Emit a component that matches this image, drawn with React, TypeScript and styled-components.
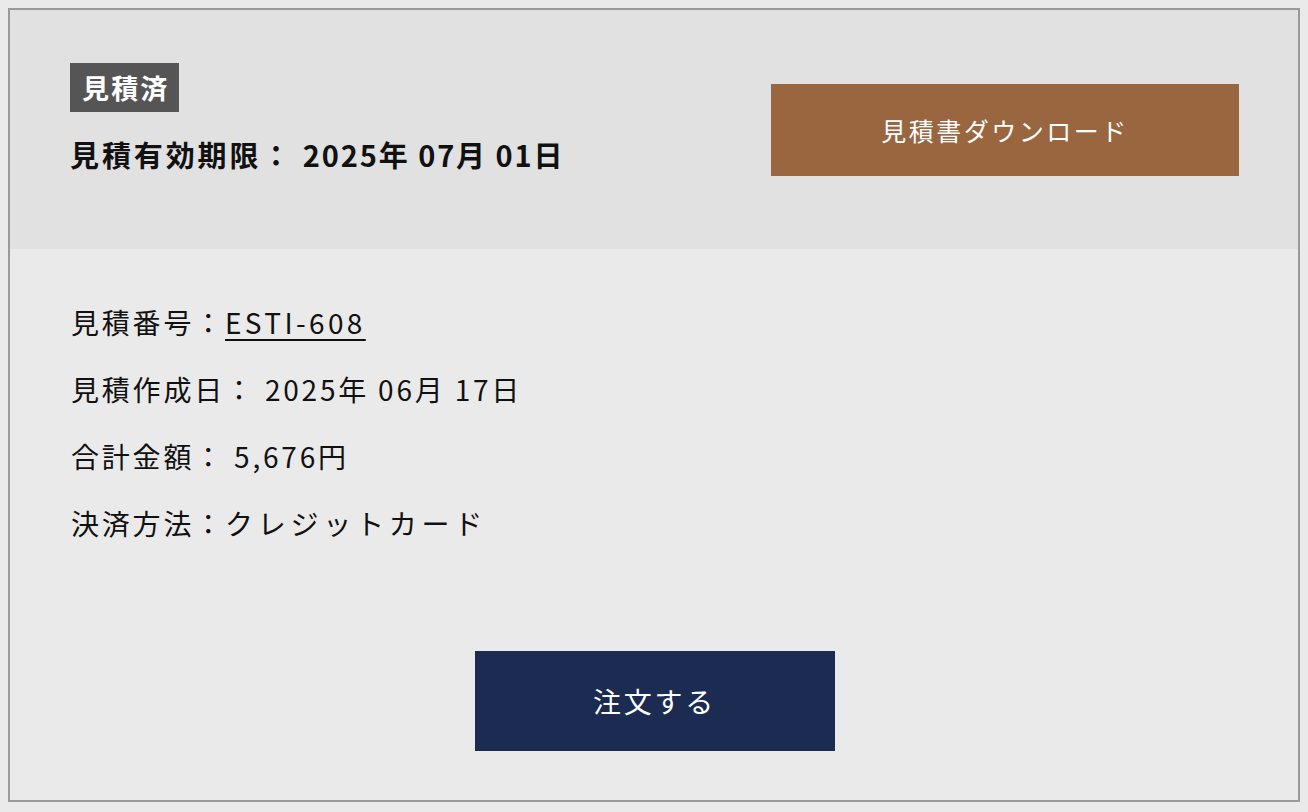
import * as React from 'react';
import styled, { createGlobalStyle } from 'styled-components';

const GlobalStyle = createGlobalStyle`
  html, body {
    margin: 0;
    padding: 0;
    background: #eaeaea;
  }
  body {
    padding: 8px;
    font-family: "Noto Sans CJK JP", "Noto Sans", sans-serif;
    color: #111;
  }
`;

const Card = styled.section`
  border: 2px solid #9a9a9a;
  background: #eaeaea;
  height: 794px;
  box-sizing: border-box;
  display: flex;
  flex-direction: column;
`;

const Header = styled.header`
  background: #e1e1e1;
  height: 239px;
  box-sizing: border-box;
  padding: 53px 59px 0 60px;
  display: flex;
  justify-content: space-between;
  align-items: flex-start;
`;

const HeaderStart = styled.div`
  display: flex;
  flex-direction: column;
  align-items: flex-start;
  gap: 22px;
`;

const Badge = styled.span`
  display: inline-flex;
  align-items: center;
  height: 49px;
  padding: 0 10px 0 12px;
  background: #555555;
  color: #fff;
  font-weight: 700;
  font-size: 27px;
  letter-spacing: 0.08em;
`;

const Expiry = styled.h2`
  margin: 0;
  font-size: 29px;
  font-weight: 700;
  letter-spacing: 0.1em;
  line-height: 40px;
  color: #111;
`;

const ExpiryDate = styled.time`
  letter-spacing: 0.065em;
`;

const ActionButton = styled.button<{ $tone: 'brown' | 'navy'; $w: number; $h: number; $size: number }>`
  width: ${(p) => p.$w}px;
  height: ${(p) => p.$h}px;
  border: none;
  border-radius: 0;
  background: ${(p) => (p.$tone === 'brown' ? '#996640' : '#1b2b51')};
  color: #fff;
  font-family: inherit;
  font-size: ${(p) => p.$size}px;
  font-weight: 400;
  letter-spacing: 0.1em;
  cursor: pointer;
`;

const DownloadWrap = styled.div`
  margin-top: 21px;
`;

const Body = styled.div`
  flex: 1;
  padding: 53px 60px 0 61px;
  display: flex;
  flex-direction: column;
`;

const InfoList = styled.dl`
  margin: 0;
  display: flex;
  flex-direction: column;
  gap: 27px;
`;

const InfoRow = styled.div`
  display: flex;
  font-size: 28px;
  line-height: 40px;
  letter-spacing: 0.1em;
`;

const Term = styled.dt`
  margin: 0;
`;

const Value = styled.dd<{ $wide?: boolean }>`
  margin: 0;
  white-space: pre;
  letter-spacing: ${(p) => (p.$wide ? '0.17em' : '0.1em')};
`;

const QuoteLink = styled.a`
  color: #111;
  text-decoration: underline;
  text-underline-offset: 5px;
  text-decoration-thickness: 2px;
  letter-spacing: 0.12em;
`;

const Footer = styled.div`
  display: flex;
  justify-content: center;
  margin-top: 108px;
`;

const rows: { term: string; value: React.ReactNode; wide?: boolean }[] = [
  { term: '見積番号：', value: <QuoteLink href="#">ESTI-608</QuoteLink> },
  { term: '見積作成日：', value: ' 2025年 06月 17日' },
  { term: '合計金額：', value: ' 5,676円' },
  { term: '決済方法：', value: 'クレジットカード', wide: true },
];

const App: React.FC = () => {
  return (
    <>
      <GlobalStyle />
      <Card>
        <Header>
          <HeaderStart>
            <Badge>見積済</Badge>
            <Expiry>
              見積有効期限： <ExpiryDate>2025年 07月 01日</ExpiryDate>
            </Expiry>
          </HeaderStart>
          <DownloadWrap>
            <ActionButton $tone="brown" $w={468} $h={92} $size={25}>
              見積書ダウンロード
            </ActionButton>
          </DownloadWrap>
        </Header>
        <Body>
          <InfoList>
            {rows.map((r) => (
              <InfoRow key={r.term}>
                <Term>{r.term}</Term>
                <Value $wide={r.wide}>{r.value}</Value>
              </InfoRow>
            ))}
          </InfoList>
          <Footer>
            <ActionButton $tone="navy" $w={360} $h={100} $size={28}>
              注文する
            </ActionButton>
          </Footer>
        </Body>
      </Card>
    </>
  );
};

export default App;
